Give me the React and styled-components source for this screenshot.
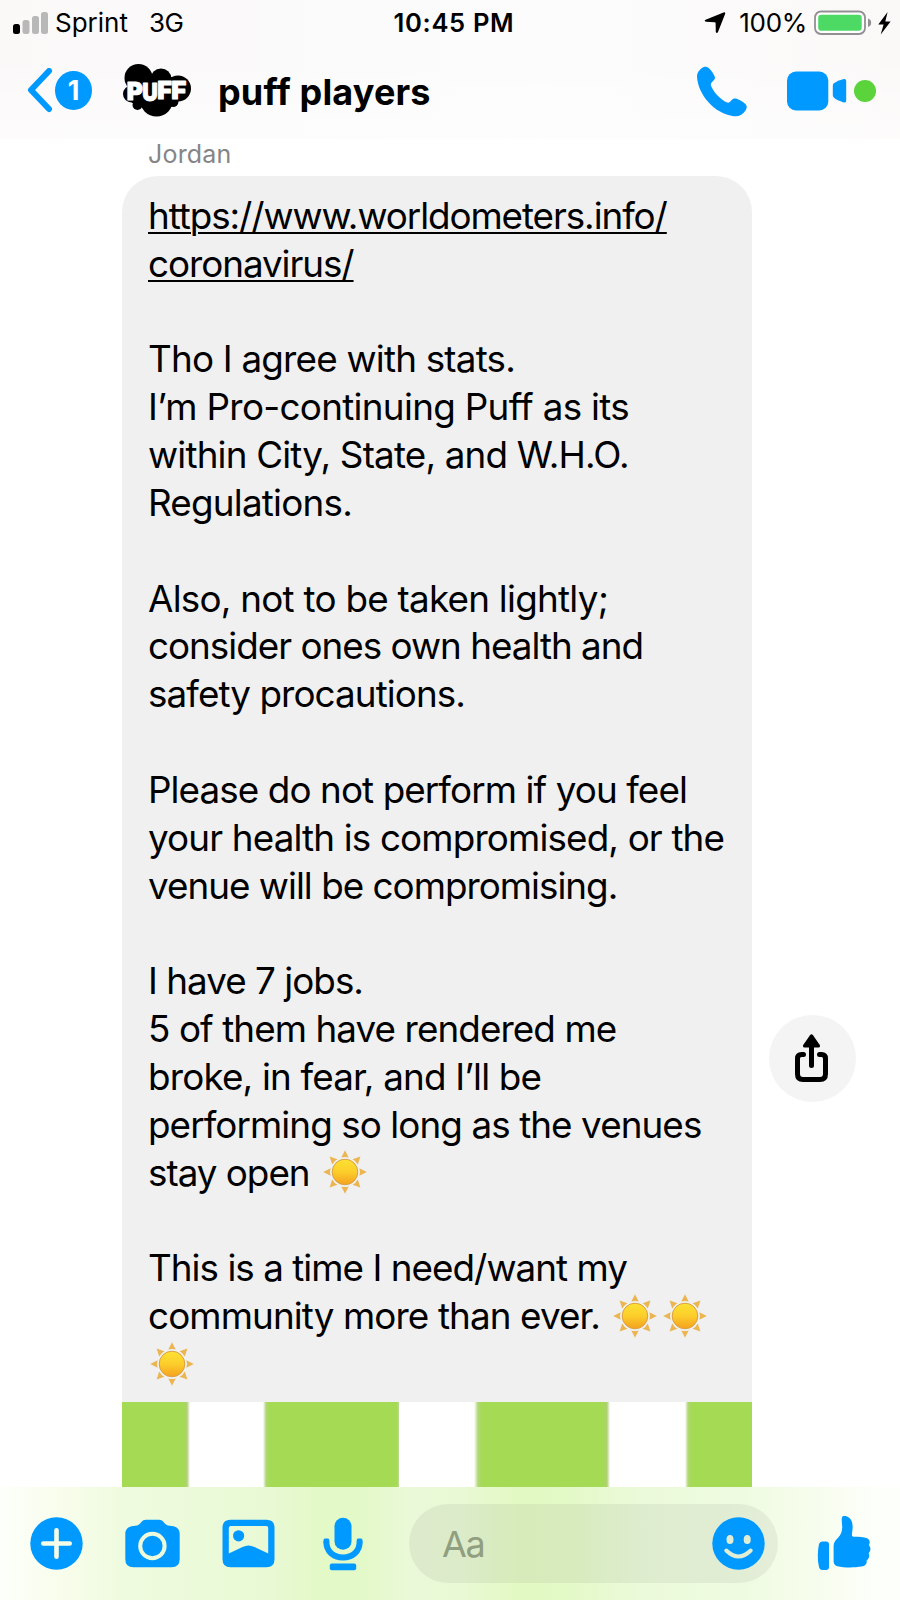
import React from "react";
import styled, { createGlobalStyle } from "styled-components";

const BLUE = "#0099ff";

const GlobalStyle = createGlobalStyle`
  * { box-sizing: border-box; }
  body {
    margin: 0;
    background: #fff;
    color: #000;
    font-family: Inter, "Liberation Sans", sans-serif;
  }
  svg { display: block; flex: none; }
`;

const Screen = styled.div`
  width: 900px;
  height: 1600px;
  display: flex;
  flex-direction: column;
  overflow: hidden;
  background: #fff;
`;

const Header = styled.header`
  height: 139px;
  flex: none;
  background:
    linear-gradient(180deg, rgba(255, 255, 255, 0) 40%, rgba(255, 255, 255, 0.5) 100%),
    linear-gradient(90deg, #fbf8f8 0%, #fbfafa 30%, #fcfcfc 60%, #fbf9f8 100%);
`;

const StatusBar = styled.div`
  height: 46px;
  padding: 0 9px 0 13px;
  display: grid;
  grid-template-columns: 1fr auto 1fr;
  align-items: center;
`;

const StatusGroup = styled.div`
  display: flex;
  align-items: center;
  justify-content: ${(p) => (p.$end ? "flex-end" : "flex-start")};
`;

const StatusText = styled.span`
  font-size: 26px;
  line-height: 46px;
  letter-spacing: ${(p) => p.$track || 0}px;
  margin-left: ${(p) => p.$gap || 0}px;
`;

const StatusIcon = styled.span`
  margin-left: ${(p) => p.$gap}px;
`;

const Clock = styled.span`
  font-size: 25.6px;
  font-weight: 600;
  line-height: 46px;
  letter-spacing: 0.65px;
  padding-left: 4px;
`;

const NavBar = styled.div`
  height: 90px;
  padding: 0 24px 0 27px;
  display: flex;
  align-items: center;
`;

const Badge = styled.span`
  width: 37px;
  height: 39px;
  margin: 0 30px 2px 2px;
  border-radius: 50%;
  background: ${BLUE};
  color: #fff;
  font-size: 27px;
  font-weight: 700;
  line-height: 39px;
  text-align: center;
`;

const Title = styled.h1`
  margin: 1px 0 0 26px;
  flex: 1;
  font-size: 36px;
  font-weight: 700;
  line-height: 44px;
  letter-spacing: 0.15px;
`;

const CallActions = styled.div`
  display: flex;
  align-items: center;
  gap: 40px;
`;

const OnlineDot = styled.span`
  width: 22px;
  height: 22px;
  margin-left: 7px;
  border-radius: 50%;
  background: #5bd33b;
`;

const Thread = styled.main`
  flex: 1;
  min-height: 0;
  padding-left: 122px;
`;

const Sender = styled.div`
  height: 37px;
  padding: 0 0 0 26px;
  color: #858585;
  font-size: 25px;
  line-height: 30px;
  letter-spacing: 0.2px;
`;

const MessageRow = styled.div`
  display: flex;
  align-items: flex-start;
`;

const Message = styled.article`
  width: 630px;
  border-radius: 36px 36px 0 0;
  overflow: hidden;
  background: #f0f0f0;
`;

const MessageBody = styled.div`
  height: 1226px;
  padding: 16px 0 0 26px;
  font-size: 36.8px;
`;

const Line = styled.div`
  height: 47.83px;
  display: flex;
  align-items: center;
  line-height: 47.83px;
  white-space: pre;
  letter-spacing: ${(p) => p.$track}px;
  text-decoration: ${(p) => (p.$link ? "underline" : "none")};
  text-decoration-thickness: 2px;
  text-underline-offset: 3px;
`;

const Suns = styled.span`
  display: flex;
  margin-left: ${(p) => p.$gap}px;
`;

const Preview = styled.div`
  height: 85px;
  background: linear-gradient(
    90deg,
    #a5da55 0 62px, #b2cf77 65px, #fff 68px 141px,
    #b2d678 144px, #a5da55 147px 275px, #b9d98c 276.5px, #fff 277.5px 352px,
    #b2d678 356px, #a5da55 360px 482px, #b2cf77 485px, #fff 488px 563px,
    #b2d678 566px, #a5da55 569px 630px
  );
`;

const ShareButton = styled.button`
  width: 87px;
  height: 87px;
  margin: 839px 0 0 17px;
  padding: 0 1px 2px 0;
  border: 0;
  border-radius: 50%;
  background: #f4f4f4;
  display: flex;
  align-items: center;
  justify-content: center;
`;

const Composer = styled.footer`
  height: 113px;
  flex: none;
  padding: 0 28px 0 28px;
  display: flex;
  align-items: center;
  background: linear-gradient(
    90deg,
    #fdfffa 0, #f8fdec 60px, #effbdf 120px, #ebfad9 200px, #e9f9d4 270px,
    #e3f9c6 325px, #e4f9c9 365px, #eaf9d8 410px, #e9f9d5 460px, #e2f9c3 520px,
    #e3f9c6 565px, #ebfada 640px, #eefbe0 740px, #f6fdec 810px, #fdfffb 880px
  );
`;

const Tools = styled.div`
  display: flex;
  align-items: center;
`;

const Tool = styled.span`
  width: 56px;
  margin-right: ${(p) => p.$gap}px;
  display: flex;
  justify-content: center;
`;

const Input = styled.div`
  width: 369px;
  height: 79px;
  padding: 0 13px 0 33px;
  border-radius: 40px;
  background: rgba(60, 60, 60, 0.07);
  display: flex;
  align-items: center;
  justify-content: space-between;
`;

const Placeholder = styled.span`
  color: #8f9f80;
  font-size: 36px;
  line-height: 44px;
  letter-spacing: -1.3px;
`;

const Like = styled.span`
  margin: 0 0 2px 39px;
`;

const SignalIcon = () => (
  <svg width="36" height="24" viewBox="0 0 36 24">
    <rect x="0" y="13" width="7" height="10" rx="2.5" />
    <g fill="#b9b8b8">
      <rect x="9.5" y="9" width="7" height="14" rx="2.5" />
      <rect x="19" y="5" width="7" height="18" rx="2.5" />
      <rect x="28" y="1" width="7" height="22" rx="2.5" />
    </g>
  </svg>
);

const LocationIcon = () => (
  <svg width="22" height="22" viewBox="0 0 22 22">
    <path d="M19.5 .4Q21.7-.2 21.1 2L14 20.1Q12.8 22 11.8 20L11.6 11.2Q11.6 10.2 10.6 10.2L2 9.8Q-.4 9 1.6 7.8Z" />
  </svg>
);

const BatteryIcon = () => (
  <svg width="58" height="26" viewBox="0 0 58 26">
    <rect x="1" y="1.5" width="50" height="22.5" rx="6" fill="#fff" stroke="#929092" strokeWidth="1.8" />
    <rect x="4.2" y="4.8" width="43.5" height="16" rx="3" fill="#4cd964" />
    <path d="M54 8.5q3.2 1 3.2 4.3T54 17Z" fill="#929092" />
  </svg>
);

const BoltIcon = () => (
  <svg width="13" height="23" viewBox="0 0 13 23">
    <path d="M9.6 0L.3 12.4H5.6L2.7 22.6L12.6 9.4H7.3Z" />
  </svg>
);

const BackIcon = () => (
  <svg width="26" height="46" viewBox="0 0 26 46">
    <path d="M22 3L4 22L22 41" fill="none" stroke={BLUE} strokeWidth="6" strokeLinecap="round" strokeLinejoin="round" />
  </svg>
);

const LOGO_LETTERS = [
  ["P", 4.8, 36.5, 16],
  ["U", 20.3, 37.5, 15.5],
  ["F", 35.3, 36.3, 14.5],
  ["F", 49.3, 35.5, 15],
];

const PuffLogo = () => (
  <svg width="70" height="56" viewBox="0 0 70 56">
    <circle cx="16.5" cy="15" r="14" />
    <circle cx="39" cy="16" r="10.5" />
    <circle cx="56" cy="25.5" r="13" />
    <circle cx="9.5" cy="31" r="8.5" />
    <circle cx="34.5" cy="37" r="16.5" />
    <circle cx="15.5" cy="42" r="5" />
    <circle cx="51" cy="38.5" r="5.5" />
    <rect x="10" y="14" width="44" height="26" />
    <g
      fill="#fff"
      stroke="#fff"
      strokeWidth="1"
      strokeLinejoin="round"
      fontFamily="Inter, sans-serif"
      fontWeight="900"
      fontSize="25"
    >
      {LOGO_LETTERS.map(([ch, x, y, w], i) => (
        <text key={i} x={x} y={y} textLength={w} lengthAdjust="spacingAndGlyphs">
          {ch}
        </text>
      ))}
    </g>
  </svg>
);

const PhoneIcon = () => (
  <svg width="50" height="51" viewBox="0 0 50 51">
    <path
      fill={BLUE}
      d="M4.5 2.2C6.5.6 9 0 11 1.6C13.8 3.8 16.3 7.2 17.7 10.4C18.4 12.2 17.6 13.4 16.5 14.6C15 16.2 13.3 17.3 14 19.6C15.6 25.4 24.4 34.6 30.2 36.6C32.3 37.3 33.2 35.4 34.7 34C36.4 32.4 38 32.2 40.2 32.9C43.3 34 46.6 36 48.8 38.6C50.2 40.4 49.9 42.2 48.7 44.2C46.1 48.6 41.7 50.8 36.8 50.2C17.7 48 .8 28.5 0 10.5C-.1 7.1 1.8 4.4 4.5 2.2Z"
    />
  </svg>
);

const VideoIcon = () => (
  <svg width="60" height="40" viewBox="0 0 60 40">
    <rect x="0" y=".5" width="41.3" height="39" rx="9" fill={BLUE} />
    <path fill={BLUE} d="M46.6 12.5Q50.5 9.5 56.8 8.1Q59.2 7.8 59.2 10V29.8Q59.2 32 56.8 31.5Q50 29.5 46.8 26.6Q45.8 25.6 45.8 24V15Q45.8 13.4 46.6 12.5Z" />
  </svg>
);

const RAYS = [0, 45, 90, 135, 180, 225, 270, 315];

const SunIcon = () => (
  <svg width="50" height="44" viewBox="-25 -22 50 44">
    <defs>
      <linearGradient id="sun-disc" x1="0" y1="0" x2="0" y2="1">
        <stop offset="0" stopColor="#fde233" />
        <stop offset=".5" stopColor="#fccd2b" />
        <stop offset="1" stopColor="#f5a11f" />
      </linearGradient>
    </defs>
    {RAYS.map((a) => (
      <path key={a} d="M-3.7-14.4L0-21.8L3.7-14.4Q0-15.6-3.7-14.4Z" fill="#ebb552" transform={`rotate(${a})`} />
    ))}
    <circle r="12.8" fill="url(#sun-disc)" stroke="#d9a145" strokeWidth="1" />
  </svg>
);

const ShareIcon = () => (
  <svg width="36" height="50" viewBox="0 0 36 50">
    <path
      d="M9.5 21.5H7.5Q3.5 21.5 3.5 25.5V41Q3.5 46.5 9 46.5H26Q31.5 46.5 31.5 41V25.5Q31.5 21.5 27.5 21.5H25.5M17.5 10V32.5"
      fill="none"
      stroke="#000"
      strokeWidth="5"
      strokeLinecap="round"
    />
    <path d="M16 2.2Q17.5.2 19 2.2L25.8 12Q26.6 14.2 24.6 14.4H10.4Q8.4 14.2 9.2 12Z" />
  </svg>
);

const PlusIcon = () => (
  <svg width="53" height="53" viewBox="0 0 53 53">
    <circle cx="26.5" cy="26.5" r="26.2" fill={BLUE} />
    <path d="M26.5 13.3V39.7M13.3 26.5H39.7" stroke="#f5fde8" strokeWidth="4.6" strokeLinecap="round" />
  </svg>
);

const CameraIcon = () => (
  <svg width="55" height="49" viewBox="0 0 55 49">
    <path
      fill={BLUE}
      d="M21 .8H34C38 .8 38.5 3.8 41 5.6C43.5 7.3 46 6.6 48.5 7.3C52.5 8.4 54.7 11 54.7 15V40Q54.7 48.3 46.5 48.3H8.5Q.3 48.3 .3 40V15C.3 11 2.5 8.4 6.5 7.3C9 6.6 11.5 7.3 14 5.6C16.5 3.8 17 .8 21 .8Z"
    />
    <circle cx="27.4" cy="27" r="12.2" fill="none" stroke="#ecfbdc" strokeWidth="4" />
  </svg>
);

const PhotoIcon = () => (
  <svg width="53" height="49" viewBox="0 0 53 49">
    <path
      fill={BLUE}
      fillRule="evenodd"
      d="M8.5.8H44.5Q52.5.8 52.5 8.8V40.3Q52.5 48.3 44.5 48.3H8.5Q.5 48.3 .5 40.3V8.8Q.5.8 8.5.8ZM8.8 7Q6.8 7 6.8 9V34.5L20.5 28Q26.5 25 32.5 28L46.2 34.5V9Q46.2 7 44.2 7Z"
    />
    <circle cx="16.6" cy="16.8" r="5.6" fill={BLUE} />
  </svg>
);

const MicIcon = () => (
  <svg width="40" height="54" viewBox="0 0 40 54">
    <rect x="11.5" y=".7" width="17" height="32" rx="8.5" fill={BLUE} />
    <path d="M3.3 24.5C3.3 34.5 10.5 40.4 20 40.4S36.7 34.5 36.7 24.5" fill="none" stroke={BLUE} strokeWidth="6" />
    <rect x=".5" y="21.5" width="5.8" height="5" rx="1.5" fill={BLUE} />
    <rect x="33.7" y="21.5" width="5.8" height="5" rx="1.5" fill={BLUE} />
    <rect x="6.8" y="46.5" width="26.4" height="6.8" rx="2" fill={BLUE} />
  </svg>
);

const SmileIcon = () => (
  <svg width="53" height="53" viewBox="0 0 53 53">
    <circle cx="26.5" cy="26.5" r="26.2" fill={BLUE} />
    <ellipse cx="18" cy="22.5" rx="3.5" ry="4.6" fill="#e2eed4" />
    <ellipse cx="35.2" cy="22.5" rx="3.5" ry="4.6" fill="#e2eed4" />
    <path d="M14.3 33.5Q26.5 45.5 38.7 33.5" fill="none" stroke="#e2eed4" strokeWidth="4" strokeLinecap="round" />
  </svg>
);

const ThumbIcon = () => (
  <svg width="54" height="56" viewBox="0 0 54 56">
    <path fill={BLUE} d="M5.2 26.4H9Q12 26.4 12 29.4V52Q12 55 9 55H5.2Q2.8 55 2 52Q.6 46.5 .8 40Q.9 34 2 29Q2.8 26.4 5.2 26.4Z" />
    <path
      fill={BLUE}
      d="M25.4 1.4C29-.1 33.6 2.2 35 7.2C36.3 12 35.2 16.2 34.9 19.8C35 21.2 35.8 21.8 37.2 21.8C42 21.8 46.6 22 50 23.2C53 24.4 53.4 27.8 51.8 30C54 32.4 54 36 51.6 38.2C53 41 52 43.8 49.6 45.4C50.4 48.8 48 51 44.6 51.6C37 52.8 27 52.8 20.4 51.2C17.6 50.4 16.6 48.8 16.6 46V31C16.6 27.2 18.6 25.4 21 22.8C24 19.6 25.4 16 25.2 11.4C25.1 7.8 24 3.4 25.4 1.4Z"
    />
  </svg>
);

const MESSAGE = [
  { text: "https://www.worldometers.info/", track: -1.07, link: true },
  { text: "coronavirus/", track: -1.05, link: true },
  {},
  { text: "Tho I agree with stats.", track: -0.785 },
  { text: "I’m Pro-continuing Puff as its", track: -0.69 },
  { text: "within City, State, and W.H.O.", track: -0.81 },
  { text: "Regulations.", track: -0.773 },
  {},
  { text: "Also, not to be taken lightly;", track: -0.74 },
  { text: "consider ones own health and", track: -0.99 },
  { text: "safety procautions.", track: -0.91 },
  {},
  { text: "Please do not perform if you feel", track: -0.9 },
  { text: "your health is compromised, or the", track: -0.84 },
  { text: "venue will be compromising.", track: -0.98 },
  {},
  { text: "I have 7 jobs.", track: -0.971 },
  { text: "5 of them have rendered me", track: -0.91 },
  { text: "broke, in fear, and I’ll be", track: -0.81 },
  { text: "performing so long as the venues", track: -0.91 },
  { text: "stay open", track: -1.0, suns: 1, gap: 10 },
  {},
  { text: "This is a time I need/want my", track: -0.96 },
  { text: "community more than ever.", track: -0.88, suns: 2, gap: 10 },
  { suns: 1, gap: -1 },
];

export default function App() {
  return (
    <Screen>
      <GlobalStyle />
      <Header>
        <StatusBar>
          <StatusGroup>
            <SignalIcon />
            <StatusText $gap={6} $track={0}>Sprint</StatusText>
            <StatusText $gap={21} $track={-0.6}>3G</StatusText>
          </StatusGroup>
          <Clock>10:45 PM</Clock>
          <StatusGroup $end>
            <LocationIcon />
            <StatusText $gap={13} $track={-0.3}>100%</StatusText>
            <StatusIcon $gap={7}>
              <BatteryIcon />
            </StatusIcon>
            <StatusIcon $gap={6}>
              <BoltIcon />
            </StatusIcon>
          </StatusGroup>
        </StatusBar>
        <NavBar>
          <BackIcon />
          <Badge>1</Badge>
          <PuffLogo />
          <Title>puff players</Title>
          <CallActions>
            <PhoneIcon />
            <VideoIcon />
          </CallActions>
          <OnlineDot />
        </NavBar>
      </Header>
      <Thread>
        <Sender>Jordan</Sender>
        <MessageRow>
          <Message>
            <MessageBody>
              {MESSAGE.map((l, i) => (
                <Line key={i} $track={l.track || 0} $link={l.link}>
                  {l.text}
                  {l.suns && (
                    <Suns $gap={l.gap}>
                      {Array.from({ length: l.suns }, (_, n) => (
                        <SunIcon key={n} />
                      ))}
                    </Suns>
                  )}
                </Line>
              ))}
            </MessageBody>
            <Preview />
          </Message>
          <ShareButton aria-label="Share">
            <ShareIcon />
          </ShareButton>
        </MessageRow>
      </Thread>
      <Composer>
        <Tools>
          <Tool $gap={40}><PlusIcon /></Tool>
          <Tool $gap={40}><CameraIcon /></Tool>
          <Tool $gap={39}><PhotoIcon /></Tool>
          <Tool $gap={38}><MicIcon /></Tool>
        </Tools>
        <Input>
          <Placeholder>Aa</Placeholder>
          <SmileIcon />
        </Input>
        <Like>
          <ThumbIcon />
        </Like>
      </Composer>
    </Screen>
  );
}
